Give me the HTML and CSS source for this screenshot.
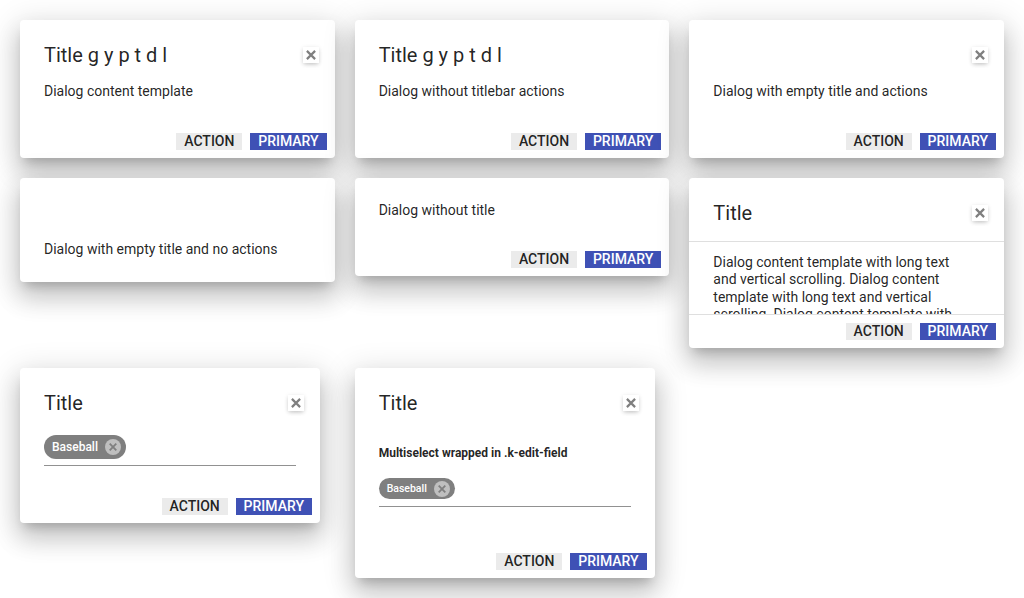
FILE: index.html
```html
<!DOCTYPE html>
<html lang="en">
<head>
<meta charset="utf-8">
<title>Dialogs</title>
<link rel="stylesheet" href="styles.css">
</head>
<body>
<svg class="sprite" width="0" height="0">
  <symbol id="close" viewBox="0 0 16 16"><path d="M3.9 3.9 12.1 12.1M12.1 3.9 3.9 12.1"/></symbol>
  <symbol id="remove" viewBox="0 0 16 16"><path d="M4.7 4.7 11.3 11.3M11.3 4.7 4.7 11.3"/></symbol>
</svg>
<main class="grid">
  <section class="dialog">
    <header class="titlebar"><h2 class="title">Title g y p t d l</h2><button class="close"><svg class="icon"><use href="#close"/></svg></button></header>
    <div class="content">Dialog content template</div>
    <footer class="actions"><button class="button">ACTION</button><button class="button primary">PRIMARY</button></footer>
  </section>
  <section class="dialog">
    <header class="titlebar"><h2 class="title">Title g y p t d l</h2></header>
    <div class="content">Dialog without titlebar actions</div>
    <footer class="actions"><button class="button">ACTION</button><button class="button primary">PRIMARY</button></footer>
  </section>
  <section class="dialog">
    <header class="titlebar"><h2 class="title"></h2><button class="close"><svg class="icon"><use href="#close"/></svg></button></header>
    <div class="content">Dialog with empty title and actions</div>
    <footer class="actions"><button class="button">ACTION</button><button class="button primary">PRIMARY</button></footer>
  </section>

  <section class="dialog no-actions">
    <header class="titlebar"><h2 class="title"></h2></header>
    <div class="content">Dialog with empty title and no actions</div>
  </section>
  <section class="dialog no-title">
    <div class="content">Dialog without title</div>
    <footer class="actions"><button class="button">ACTION</button><button class="button primary">PRIMARY</button></footer>
  </section>
  <section class="dialog scrolling">
    <header class="titlebar"><h2 class="title">Title</h2><button class="close"><svg class="icon"><use href="#close"/></svg></button></header>
    <div class="content">Dialog content template with long text and vertical scrolling. Dialog content template with long text and vertical scrolling. Dialog content template with</div>
    <footer class="actions"><button class="button">ACTION</button><button class="button primary">PRIMARY</button></footer>
  </section>

  <section class="dialog select">
    <header class="titlebar"><h2 class="title">Title</h2><button class="close"><svg class="icon"><use href="#close"/></svg></button></header>
    <div class="content">
      <div class="multiselect"><span class="chip">Baseball<span class="remove"><svg class="icon"><use href="#remove"/></svg></span></span></div>
    </div>
    <footer class="actions"><button class="button">ACTION</button><button class="button primary">PRIMARY</button></footer>
  </section>
  <section class="dialog select edit">
    <header class="titlebar"><h2 class="title">Title</h2><button class="close"><svg class="icon"><use href="#close"/></svg></button></header>
    <div class="content">
      <h6 class="label">Multiselect wrapped in .k-edit-field</h6>
      <div class="multiselect small"><span class="chip">Baseball<span class="remove"><svg class="icon"><use href="#remove"/></svg></span></span></div>
    </div>
    <footer class="actions"><button class="button">ACTION</button><button class="button primary">PRIMARY</button></footer>
  </section>
</main>
</body>
</html>
```
FILE: styles.css
```css
* { box-sizing: border-box; }
body {
  margin: 0;
  height: 598px;
  overflow: hidden;
  background: #fff;
  color: rgba(0, 0, 0, 0.87);
  font: 14px/1.25 Roboto, sans-serif;
}
.sprite { display: none; }
.grid {
  display: grid;
  grid-template-columns: repeat(3, 1fr);
  gap: 20px;
  align-items: start;
  padding: 20px;
}
.dialog {
  position: relative;
  display: flex;
  flex-direction: column;
  height: 138px;
  border-radius: 4px;
  background: #fff;
  box-shadow: 0 8px 10px -5px rgba(0, 0, 0, 0.2), 0 16px 24px 2px rgba(0, 0, 0, 0.14), 0 6px 30px 5px rgba(0, 0, 0, 0.12);
}
.titlebar {
  display: flex;
  align-items: center;
  justify-content: space-between;
  flex: none;
  height: 46px;
  padding: 24px 16px 0 24px;
}
.title {
  margin: 0;
  font-size: 20px;
  font-weight: 400;
  line-height: 23px;
}
.close {
  display: flex;
  width: 16px;
  height: 16px;
  padding: 0;
  border: 0;
  background: #fff;
  color: #7f7f7f;
  box-shadow: 0 2px 4px -1px rgba(0, 0, 0, 0.18), 0 1px 5px rgba(0, 0, 0, 0.1);
}
.icon {
  width: 16px;
  height: 16px;
  fill: none;
  stroke: currentColor;
  stroke-width: 2.2;
}
.content {
  flex: 1;
  min-height: 0;
  overflow: hidden;
  padding: 16.5px 24px 0;
}
.actions {
  display: flex;
  justify-content: flex-end;
  flex: none;
  gap: 7.8px;
  padding: 8px;
}
.button {
  height: 17px;
  padding: 0 8px;
  border: 0;
  background: #ebebeb;
  color: rgba(0, 0, 0, 0.87);
  font: 500 14px/17px Roboto, sans-serif;
}
.primary { background: #3f51b5; color: #fff; }

.no-actions { height: 104px; }
.no-title { height: 98px; }
.no-title .content { padding-top: 23.5px; }

.scrolling { height: 170px; }
.scrolling .titlebar {
  height: 64px;
  padding-bottom: 17px;
  border-bottom: 1px solid #dfdfdf;
}
.scrolling .content { padding: 11.5px 39px 0 24px; }
.scrolling .actions { border-top: 1px solid #dfdfdf; }

.select { width: 300px; height: 155px; }
.select .content { padding-top: 16px; }
.multiselect {
  display: flex;
  align-items: flex-start;
  height: 36px;
  padding-top: 5px;
  border-bottom: 1px solid #919191;
}
.chip {
  display: flex;
  align-items: center;
  gap: 7px;
  height: 24px;
  padding: 0 5px 0 8px;
  border-radius: 12px;
  background: #7f7f7f;
  color: #fff;
  font-size: 12px;
  font-weight: 500;
}
.remove {
  display: flex;
  border-radius: 50%;
  background: #bfbfbf;
  color: #7f7f7f;
}
.remove .icon { stroke-width: 1.8; }

.edit { height: 210px; }
.edit .content { padding-top: 32px; }
.label {
  margin: 0 0 15px;
  font-size: 12px;
  font-weight: 700;
  line-height: 15px;
}
.small { height: 31px; padding-top: 2px; }
.small .chip { height: 21px; font-size: 10.5px; }
```
